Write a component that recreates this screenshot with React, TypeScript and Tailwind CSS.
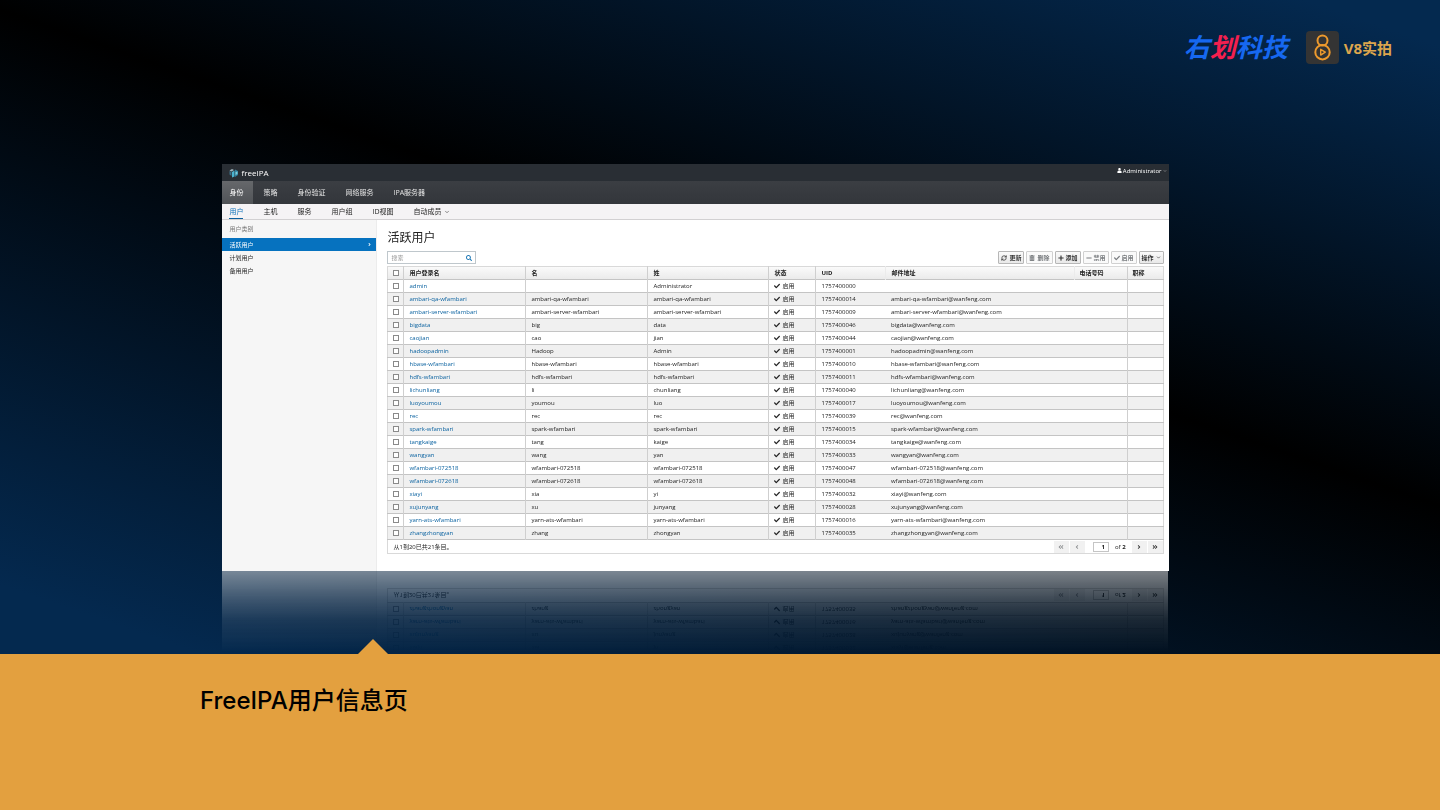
import { ReactNode } from 'react';
import clsx from 'clsx';
import { RefreshCw } from 'lucide-react';
import {
  FaAngleDoubleLeft,
  FaAngleDoubleRight,
  FaAngleLeft,
  FaAngleRight,
  FaCheck,
  FaMinus,
  FaPlus,
  FaSearch,
  FaTrashAlt,
  FaUser,
} from 'react-icons/fa';
import { FiChevronDown } from 'react-icons/fi';

type User = {
  login: string;
  first: string;
  last: string;
  uid: string;
  mail?: string;
};

const users: User[] = [
  { login: 'admin', first: '', last: 'Administrator', uid: '1757400000', mail: '' },
  { login: 'ambari-qa-wfambari', first: 'ambari-qa-wfambari', last: 'ambari-qa-wfambari', uid: '1757400014' },
  { login: 'ambari-server-wfambari', first: 'ambari-server-wfambari', last: 'ambari-server-wfambari', uid: '1757400009' },
  { login: 'bigdata', first: 'big', last: 'data', uid: '1757400046' },
  { login: 'caojian', first: 'cao', last: 'jian', uid: '1757400044' },
  { login: 'hadoopadmin', first: 'Hadoop', last: 'Admin', uid: '1757400001' },
  { login: 'hbase-wfambari', first: 'hbase-wfambari', last: 'hbase-wfambari', uid: '1757400010' },
  { login: 'hdfs-wfambari', first: 'hdfs-wfambari', last: 'hdfs-wfambari', uid: '1757400011' },
  { login: 'lichunliang', first: 'li', last: 'chunliang', uid: '1757400040' },
  { login: 'luoyoumou', first: 'youmou', last: 'luo', uid: '1757400017' },
  { login: 'rec', first: 'rec', last: 'rec', uid: '1757400039' },
  { login: 'spark-wfambari', first: 'spark-wfambari', last: 'spark-wfambari', uid: '1757400015' },
  { login: 'tangkaige', first: 'tang', last: 'kaige', uid: '1757400034' },
  { login: 'wangyan', first: 'wang', last: 'yan', uid: '1757400033' },
  { login: 'wfambari-072518', first: 'wfambari-072518', last: 'wfambari-072518', uid: '1757400047' },
  { login: 'wfambari-072618', first: 'wfambari-072618', last: 'wfambari-072618', uid: '1757400048' },
  { login: 'xiayi', first: 'xia', last: 'yi', uid: '1757400032' },
  { login: 'xujunyang', first: 'xu', last: 'junyang', uid: '1757400028' },
  { login: 'yarn-ats-wfambari', first: 'yarn-ats-wfambari', last: 'yarn-ats-wfambari', uid: '1757400016' },
  { login: 'zhangzhongyan', first: 'zhang', last: 'zhongyan', uid: '1757400035' },
];

const mainTabs = ['身份', '策略', '身份验证', '网络服务', 'IPA服务器'];
const subTabs = ['用户', '主机', '服务', '用户组', 'ID视图', '自动成员'];
const categories = ['活跃用户', '计划用户', '备用用户'];
const columns = ['用户登录名', '名', '姓', '状态', 'UID', '邮件地址', '电话号码', '职称'];

const BrandLogos = () => (
  <header className="flex items-center justify-end px-12 pt-[31px]">
    <div className="text-[26px] leading-[33px] font-bold italic text-[#1668f0]">
      右<span className="text-[#f3204f]">划</span>科技
    </div>
    <div className="ml-[18px] flex items-center gap-[5px]">
      <svg viewBox="0 0 33 33" className="size-[33px]" fill="none" stroke="#ee9a2d" strokeWidth="2">
        <rect width="33" height="33" rx="4" fill="#343434" stroke="none" />
        <circle cx="16.5" cy="9.5" r="5" />
        <circle cx="16.5" cy="21.2" r="7.2" />
        <path d="M14.7 18.3v5.8l4.6-2.9z" strokeWidth="1.4" strokeLinejoin="round" />
      </svg>
      <span className="text-[15px] leading-5 font-bold text-[#dca54d]">V8实拍</span>
    </div>
  </header>
);

const IpaMark = () => (
  <svg viewBox="0 0 20 20" className="size-[10px]">
    <path d="M1 5l5-3 4 2-5 3z" fill="#9fb4bd" />
    <path d="M1 6l4 2v8l-4-3z" fill="#3c6f86" />
    <path d="M6 8l5-3v12l-5 2z" fill="#4bb3cf" />
    <path d="M12 3l6 3v8l-6 4z" fill="#2f7f9e" />
    <path d="M13 8l4-1v5l-4 2z" fill="#7ccbd8" />
  </svg>
);

const ToolButton = ({ children, muted }: { children: ReactNode; muted?: boolean }) => (
  <button
    type="button"
    disabled={muted}
    className={clsx(
      'flex h-[13px] items-center gap-[2px] rounded-[1px] border px-[2px] font-bold whitespace-nowrap',
      muted
        ? 'border-[#d0d0d0] bg-[#fafafa] text-[#7a7d80]'
        : 'border-[#b7b7b7] bg-linear-to-b from-[#fafafa] to-[#e9e9e9] text-[#333]',
    )}
  >
    {children}
  </button>
);

const PageButton = ({ children, label, muted }: { children: ReactNode; label: string; muted?: boolean }) => (
  <button
    type="button"
    aria-label={label}
    className={clsx(
      'flex h-3 w-[15px] items-center justify-center bg-[#f1f1f1]',
      muted ? 'text-[#8b8d8f]' : 'text-[#333]',
    )}
  >
    {children}
  </button>
);

const UserTable = () => (
  <table className="w-full table-fixed border-collapse border border-[#d9d9d9] text-left">
    <colgroup>
      <col className="w-4" />
      <col className="w-[122px]" />
      <col className="w-[122px]" />
      <col className="w-[121px]" />
      <col className="w-[47px]" />
      <col className="w-[70px]" />
      <col />
      <col className="w-[53px]" />
      <col className="w-9" />
    </colgroup>
    <thead>
      <tr className="h-[13px] border-b border-[#c4c4c4] bg-linear-to-b from-[#fafafa] to-[#ebebeb]">
        <th className="p-0">
          <input
            type="checkbox"
            aria-label="全选"
            className="mx-auto block size-[6px] appearance-none border border-[#8a8a8a] bg-white"
          />
        </th>
        {columns.map((name) => (
          <th
            key={name}
            className={clsx(
              'border-l px-[5px] py-0 font-bold text-[#222]',
              name === '邮件地址' || name === '电话号码' ? 'border-[#ebebeb]' : 'border-[#cfcfcf]',
            )}
          >
            {name}
          </th>
        ))}
      </tr>
    </thead>
    <tbody>
      {users.map((user) => (
        <tr key={user.login} className="h-[13px] border-b border-[#c4c4c4] even:bg-[#f0f0f0]">
          <td className="p-0">
            <input
              type="checkbox"
              aria-label={user.login}
              className="mx-auto block size-[6px] appearance-none border border-[#8a8a8a] bg-white"
            />
          </td>
          <td className="border-l border-[#cfcfcf] px-[5px] py-0">
            <a href="#" className="text-[#0a62a0]">
              {user.login}
            </a>
          </td>
          <td className="border-l border-[#cfcfcf] px-[5px] py-0">{user.first}</td>
          <td className="border-l border-[#cfcfcf] px-[5px] py-0">{user.last}</td>
          <td className="border-l border-[#cfcfcf] px-[5px] py-0">
            <span className="flex items-center gap-[2px]">
              <FaCheck />
              启用
            </span>
          </td>
          <td className="border-l border-[#cfcfcf] px-[5px] py-0">{user.uid}</td>
          <td className="px-[5px] py-0">{user.mail ?? `${user.login}@wanfeng.com`}</td>
          <td className="px-[5px] py-0"></td>
          <td className="border-l border-[#cfcfcf] px-[5px] py-0"></td>
        </tr>
      ))}
    </tbody>
  </table>
);

const IpaWindow = () => (
  <div className="bg-white text-[6px] leading-[10px] text-[#222] [-webkit-box-reflect:below_0_linear-gradient(transparent_80%,rgba(255,255,255,0.1)_88%,rgba(255,255,255,0.24)_93%,rgba(255,255,255,0.48))]">
    <div className="flex h-[17px] items-center justify-between bg-[#292e34] pr-[2px] pl-[7px] text-white">
      <div className="flex items-center gap-[2px] text-[8px]">
        <IpaMark />
        <span>
          free<b className="font-medium">IPA</b>
        </span>
      </div>
      <button type="button" className="flex items-center gap-px pb-1">
        <FaUser className="size-[5px]" />
        Administrator
        <FiChevronDown className="size-1" />
      </button>
    </div>

    <nav className="flex h-[23px] bg-linear-to-b from-[#3b3e43] to-[#33363b] text-[7px] text-[#e4e4e4]">
      {mainTabs.map((tab, i) => (
        <a
          key={tab}
          href="#"
          className={clsx(
            'flex items-center pr-[10px]',
            i === 0 ? 'bg-linear-to-b from-[#66686b] to-[#505357] pl-[7px] text-white' : 'pl-[10px]',
          )}
        >
          {tab}
        </a>
      ))}
    </nav>

    <nav className="flex h-4 gap-5 border-b border-[#d2d0d2] bg-[#f5f3f5] pl-[7px] text-[7px]">
      {subTabs.map((tab, i) => (
        <a
          key={tab}
          href="#"
          className={clsx('flex items-center gap-[2px]', i === 0 && 'border-b border-[#0b5f9e] pt-px text-[#0b6fb8]')}
        >
          {tab}
          {tab === '自动成员' && <FiChevronDown className="size-[6px]" />}
        </a>
      ))}
    </nav>

    <div className="flex">
      <aside className="w-[155px] shrink-0 border-r border-[#ececec] bg-[#f6f6f6]">
        <h2 className="px-[7px] pt-1 pb-1 text-[#777]">用户类别</h2>
        <ul>
          {categories.map((name, i) => (
            <li key={name}>
              <a
                href="#"
                className={clsx(
                  'flex h-[13px] items-center justify-between pr-1 pl-[7px]',
                  i === 0 && 'bg-[#0672bf] text-white',
                )}
              >
                {name}
                {i === 0 && <FaAngleRight className="size-[5px]" />}
              </a>
            </li>
          ))}
        </ul>
      </aside>

      <main className="min-w-0 flex-1 pt-[10px] pr-[5px] pb-[17px] pl-[10px]">
        <h1 className="text-[12px] leading-4">活跃用户</h1>
        <div className="mt-[5px] flex items-center justify-between">
          <label className="flex h-[13px] w-[89px] items-center border border-[#bfc7cc] px-[3px]">
            <input
              type="text"
              aria-label="搜索"
              placeholder="搜索"
              className="min-w-0 flex-1 bg-transparent outline-none placeholder:text-[#999]"
            />
            <FaSearch className="text-[#1a76b5]" />
          </label>
          <div className="flex gap-[2px]">
            <ToolButton>
              <RefreshCw className="size-[6px]" strokeWidth={3} />
              更新
            </ToolButton>
            <ToolButton muted>
              <FaTrashAlt />
              删除
            </ToolButton>
            <ToolButton>
              <FaPlus />
              添加
            </ToolButton>
            <ToolButton muted>
              <FaMinus />
              禁用
            </ToolButton>
            <ToolButton muted>
              <FaCheck />
              启用
            </ToolButton>
            <ToolButton>
              操作
              <FiChevronDown className="size-[5px]" strokeWidth={3} />
            </ToolButton>
          </div>
        </div>

        <div className="mt-[2px]">
          <UserTable />
          <div className="flex h-[14px] items-center justify-between border border-t-0 border-[#d9d9d9] pl-[5px]">
            <span>从1到20已共21条目。</span>
            <div className="flex items-center gap-px">
              <PageButton label="第一页" muted>
                <FaAngleDoubleLeft />
              </PageButton>
              <PageButton label="上一页" muted>
                <FaAngleLeft />
              </PageButton>
              <input
                type="text"
                aria-label="页码"
                defaultValue="1"
                className="ml-[7px] h-[10px] w-4 border border-[#c5c5c5] bg-white pr-[3px] text-right font-bold"
              />
              <span className="mx-[5px]">
                of <b>2</b>
              </span>
              <PageButton label="下一页">
                <FaAngleRight />
              </PageButton>
              <PageButton label="最后一页">
                <FaAngleDoubleRight />
              </PageButton>
            </div>
          </div>
        </div>
      </main>
    </div>
  </div>
);

const App = () => {
  return (
    <div className="flex min-h-screen flex-col font-['Open_Sans','Noto_Sans_CJK_SC',sans-serif]">
      <section className="overflow-hidden bg-[linear-gradient(19deg,#04294f_6%,#000_56%,#04294f_96%)] pb-[83px]">
        <BrandLogos />
        <div className="mt-[100px] mr-[18.85%] ml-[15.45%]">
          <IpaWindow />
        </div>
      </section>

      <footer className="relative flex-1 bg-[#e3a03f] px-[200px] py-7">
        <svg viewBox="0 0 30 15" className="absolute -top-[15px] left-[358px] h-[15px] w-[30px]" fill="#e3a03f">
          <path d="M0 15L15 0l15 15z" />
        </svg>
        <p className="font-['Inter','Noto_Sans_CJK_SC',sans-serif] text-[24px] leading-[38px] font-medium text-black">
          FreeIPA用户信息页
        </p>
      </footer>
    </div>
  );
};

export default App;
